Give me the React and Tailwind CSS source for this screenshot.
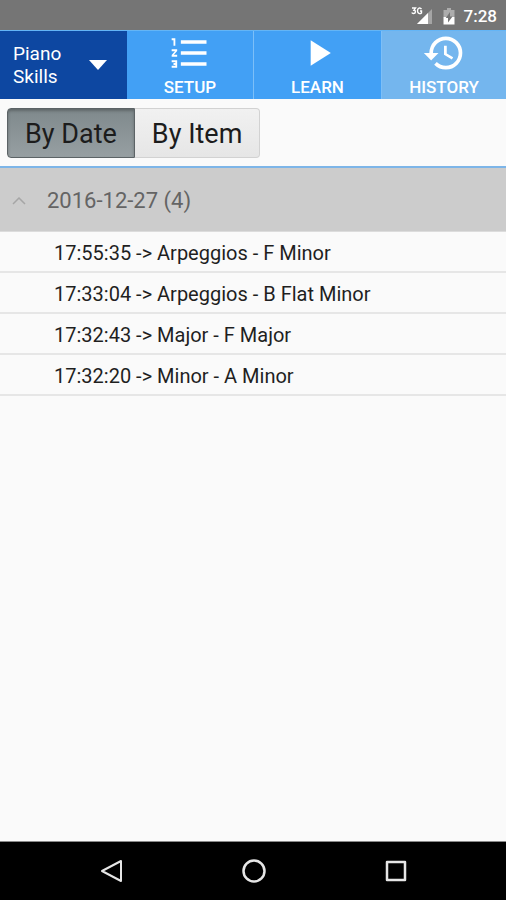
import { useState } from 'react';
import { MdFormatListNumbered, MdPlayArrow, MdHistory } from 'react-icons/md';

const TABS = [
    { id: 'setup', label: 'SETUP', icon: MdFormatListNumbered },
    { id: 'learn', label: 'LEARN', icon: MdPlayArrow },
    { id: 'history', label: 'HISTORY', icon: MdHistory }
];

const HISTORY = [
    { time: '17:55:35', item: 'Arpeggios - F Minor' },
    { time: '17:33:04', item: 'Arpeggios - B Flat Minor' },
    { time: '17:32:43', item: 'Major - F Major' },
    { time: '17:32:20', item: 'Minor - A Minor' }
];

function StatusBar() {
    return (
        <div className="flex h-[30px] items-center justify-end bg-[#757575] pt-px pr-[9px] text-white">
            <svg className="mr-[10px] h-5 w-[22px]" viewBox="0 0 22 20" aria-hidden="true">
                <path d="M21 3v15H6z" fill="#fff" fillOpacity="0.35" />
                <path d="M17 7v11H6z" fill="#fff" />
                <path d="M1 2h3.5L3 4.200c2 0 2 3.300-.5 3.300C1.600 7.500 1 7 .8 6.500M10.500 3.200C9 1 6.500 2 6.500 4.800s2.500 3.500 4 2.200V5H9" fill="none" stroke="#fff" strokeWidth="1.400" />
            </svg>
            <svg className="mr-[9px] h-5 w-3" viewBox="0 0 12 20" aria-hidden="true">
                <path d="M4 2h4v2h3.500v7H.5V4H4z" fill="#fff" fillOpacity="0.4" />
                <path d="M.5 11h11v7.500H.5z" fill="#fff" />
                <path d="M7 6v4.500h2.500L5 16.500V12H2.800z" fill="#757575" />
            </svg>
            <span className="text-[17px] leading-5 font-medium">7:28</span>
        </div>
    );
}

function TabBar({ active, onChange }) {
    return (
        <nav className="grid h-[69px] grid-cols-[127fr_126fr_128fr_125fr] border-t border-[#64b5f6] text-white">
            <button type="button" aria-haspopup="menu" className="flex items-center justify-between bg-[#0d47a1] pr-5 pl-[13px] text-left">
                <span className="w-14 text-[19px] leading-[23px]">Piano Skills</span>
                <svg className="h-[10px] w-[18px]" viewBox="0 0 18 10" aria-hidden="true">
                    <path d="M0 0h18L9 10z" fill="currentColor" />
                </svg>
            </button>
            {TABS.map(({ id, label, icon: Icon }) => (
                <button
                    key={id}
                    type="button"
                    onClick={() => onChange(id)}
                    className={`flex flex-col items-center ${id === 'setup' ? '' : 'border-l border-[#7cbff8]'} ${active === id ? 'bg-[#74b6ee]' : 'bg-[#42a0f5]'}`}
                >
                    <Icon size={44} />
                    <span className="text-[17px] leading-6 font-medium">{label}</span>
                </button>
            ))}
        </nav>
    );
}

function ViewToggle({ view, onChange }) {
    const on = 'bg-linear-to-b from-[#7f898c] to-[#979fa2] border-[#5c6366] shadow-[inset_0_2px_3px_rgba(0,0,0,0.25)]';
    const off = 'bg-linear-to-b from-[#f1f1f1] to-[#e6e6e6] border-[#d2d2d2]';

    return (
        <div className="flex h-[69px] items-center border-b-2 border-[#7db5e8] px-[7px] text-[27px] leading-8 text-[#1c1c1c]">
            <button
                type="button"
                onClick={() => onChange('date')}
                className={`h-[50px] rounded-l-[4px] border px-[17px] pt-0.5 ${view === 'date' ? on : off}`}
            >
                By Date
            </button>
            <button
                type="button"
                onClick={() => onChange('item')}
                className={`h-[50px] rounded-r-[4px] border border-l-0 px-[17px] pt-0.5 ${view === 'item' ? on : off}`}
            >
                By Item
            </button>
        </div>
    );
}

function HistoryGroup({ title, entries }) {
    const [open, setOpen] = useState(true);

    return (
        <section>
            <button
                type="button"
                aria-expanded={open}
                onClick={() => setOpen(!open)}
                className="flex h-16 w-full items-center border-b border-[#dcdcdc] bg-[#cccccc] pt-0.5 pl-3 text-[22px] leading-7 text-[#646464]"
            >
                <svg className={`mr-[21px] h-2 w-[14px] ${open ? '' : 'rotate-180'}`} viewBox="0 0 14 8" aria-hidden="true">
                    <path d="M1 7l6-6 6 6" fill="none" stroke="#a6a6a6" strokeWidth="1.500" />
                </svg>
                {title}
            </button>
            {open && (
                <ul>
                    {entries.map((entry) => (
                        <li key={entry.time} className="flex h-[41px] items-center border-b-2 border-[#e6e6e6] pt-0.5 pl-[54px] text-xl leading-6 text-[#1f1f1f]">
                            {entry.time} -&gt; {entry.item}
                        </li>
                    ))}
                </ul>
            )}
        </section>
    );
}

function NavigationBar() {
    return (
        <div className="flex h-[59px] items-center justify-center gap-[118px] border-t border-[#8a8a8a] bg-black pl-0.5 text-[#e6e6e6]">
            <button type="button" aria-label="Back">
                <svg className="size-6" viewBox="0 0 24 24" fill="none" stroke="currentColor" strokeWidth="2" strokeLinejoin="round">
                    <path d="M21 2v20L2 12z" />
                </svg>
            </button>
            <button type="button" aria-label="Home">
                <svg className="size-6" viewBox="0 0 24 24" fill="none" stroke="currentColor" strokeWidth="2.500">
                    <circle cx="12" cy="12" r="10.500" />
                </svg>
            </button>
            <button type="button" aria-label="Recent apps">
                <svg className="size-6" viewBox="0 0 24 24" fill="none" stroke="currentColor" strokeWidth="2.500" strokeLinejoin="round">
                    <path d="M3 3h18v18H3z" />
                </svg>
            </button>
        </div>
    );
}

export default function App() {
    const [tab, setTab] = useState('history');
    const [view, setView] = useState('date');

    return (
        <div className="flex min-h-screen flex-col bg-[#fafafa] font-['Roboto',sans-serif]">
            <StatusBar />
            <TabBar active={tab} onChange={setTab} />
            <ViewToggle view={view} onChange={setView} />
            <main className="flex-1">
                <HistoryGroup title="2016-12-27 (4)" entries={HISTORY} />
            </main>
            <NavigationBar />
        </div>
    );
}
